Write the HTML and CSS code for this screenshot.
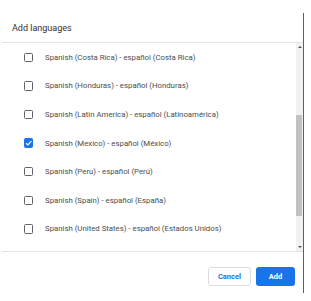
FILE: index.html
```
<!DOCTYPE html>
<html lang="en">
<head>
  <meta charset="UTF-8">
  <title>Add languages</title>
  <link rel="stylesheet" href="styles.css">
</head>
<body>
  <div class="dialog">
    <div class="header">Add languages</div>

    <div class="body">
      <div class="list">
        <div class="row"><span class="check"></span><span class="label">Spanish (Costa Rica) - español (Costa Rica)</span></div>
        <div class="row"><span class="check"></span><span class="label">Spanish (Honduras) - español (Honduras)</span></div>
        <div class="row"><span class="check"></span><span class="label">Spanish (Latin America) - español (Latinoamérica)</span></div>
        <div class="row"><span class="check checked">
          <svg width="8" height="8" viewBox="0 0 8 8"><path d="M1.2 4.2 L3.1 6 L6.8 2" fill="none" stroke="#fff" stroke-width="1.3"/></svg>
        </span><span class="label">Spanish (Mexico) - español (México)</span></div>
        <div class="row"><span class="check"></span><span class="label">Spanish (Peru) - español (Perú)</span></div>
        <div class="row"><span class="check"></span><span class="label">Spanish (Spain) - español (España)</span></div>
        <div class="row"><span class="check"></span><span class="label">Spanish (United States) - español (Estados Unidos)</span></div>
      </div>
      <div class="scrollbar">
        <div class="arrow up"></div>
        <div class="track"><div class="thumb"></div></div>
        <div class="arrow down"></div>
      </div>
    </div>

    <div class="footer">
      <button class="btn cancel">Cancel</button>
      <button class="btn add">Add</button>
    </div>
  </div>
</body>
</html>
```

FILE: styles.css
```
body { margin: 0; background: #fff; font-family: Roboto, "Liberation Sans", sans-serif; }
.dialog { margin: 13px 0 0 2px; width: 301px; height: 280px; border-right: 1px solid #5f5f5f; display: flex; flex-direction: column; background: #fff; }
.header { height: 30px; flex: none; box-sizing: border-box; padding: 10px 0 0 10px; font-size: 9px; color: #303134; border-bottom: 1px solid #e3e3e3; }
.body { height: 208px; flex: none; display: flex; border-bottom: 1px solid #e3e3e3; }
.list { flex: 1; }
.row { height: 28.6px; display: flex; align-items: center; padding-left: 21.5px; }
.check { width: 9.5px; height: 9.5px; box-sizing: border-box; border: 1.4px solid #5f6368; border-radius: 1.5px; display: flex; align-items: center; justify-content: center; }
.check.checked { background: #1a73e8; border-color: #1a73e8; }
.label { margin-left: 12px; font-size: 7.8px; color: #4a4d51; }
.scrollbar { width: 7px; background: #f1f1f1; display: flex; flex-direction: column; }
.arrow { height: 8px; display: flex; justify-content: center; align-items: center; }
.arrow.up::before { content: ""; border: 2px solid transparent; border-bottom: 2.5px solid #505050; border-top: none; }
.arrow.down::before { content: ""; border: 2px solid transparent; border-top: 2.5px solid #505050; border-bottom: none; }
.track { flex: 1; padding-top: 64px; }
.thumb { height: 101px; background: #c1c1c1; margin-right: 1px; }
.footer { flex: 1; display: flex; justify-content: flex-end; align-items: flex-start; padding: 15px 8px 0 0; gap: 5px; }
.btn { height: 19px; border-radius: 3px; font-family: Roboto, "Liberation Sans", sans-serif; font-size: 7.5px; font-weight: bold; padding: 0; cursor: pointer; }
.cancel { width: 43px; background: #fff; color: #1a73e8; border: 1px solid #dadce0; }
.add { width: 39px; background: #1a73e8; color: #fff; border: none; }
```
